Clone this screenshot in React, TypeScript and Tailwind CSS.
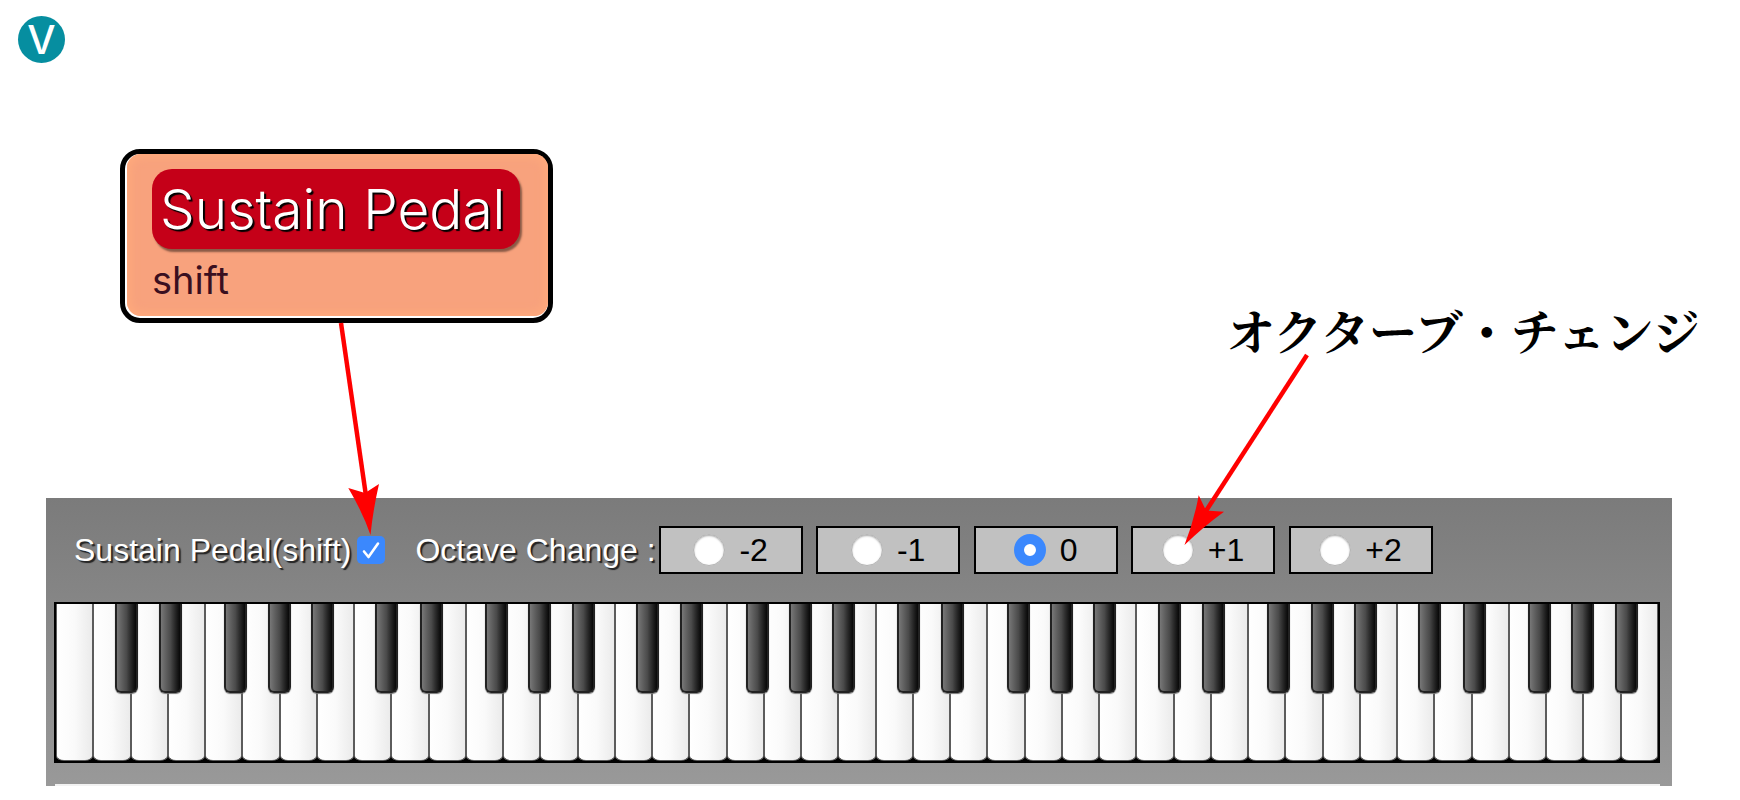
import React, { useState } from 'react';

const OCTAVES = ['-2', '-1', '0', '+1', '+2'];

// Offset of each black key from the left edge of the white key it leans on
const BLACK_KEY_OFFSET: Record<string, string> = {
  'C#': '-left-[16px]',
  'D#': '-left-[9px]',
  'F#': '-left-[18px]',
  'G#': '-left-[12px]',
  'A#': '-left-[6px]',
};

const NOTES = ['C', 'D', 'E', 'F', 'G', 'A', 'B'];
const SHARP_BEFORE: Record<string, string> = { D: 'C#', E: 'D#', G: 'F#', A: 'G#', B: 'A#' };

// One low B, then six full octaves
const KEYS = Array.from({ length: 43 }, (_, i) => {
  const note = NOTES[(i + 6) % 7];
  return { note, octave: Math.floor((i + 6) / 7), sharp: i === 0 ? undefined : SHARP_BEFORE[note] };
});

const PedalCard = () => (
  <div className="ml-[120px] rounded-[20px] border-[5px] border-black bg-white pb-[2px] pl-[2px]">
    <div className="rounded-[14px] bg-[#f8a27d] pt-[15px] pr-[28px] pb-[13px] pl-[25px] shadow-[inset_0_0_10px_3px_#ffaa7c]">
      <div className="flex h-20 w-[368px] items-center rounded-[20px] bg-[#c50018] pl-2 font-['Inter','Liberation_Sans',sans-serif] text-[55px] font-light whitespace-nowrap text-white shadow-[2px_3px_2px_#8a5a46] [text-shadow:2px_2px_1px_#000]">
        Sustain Pedal
      </div>
      <div className="mt-2 font-['Inter','Liberation_Sans',sans-serif] text-[38px] leading-[46px] text-[#3a0f20]">shift</div>
    </div>
  </div>
);

const OctaveOption = ({ value, checked, onSelect }: { value: string; checked: boolean; onSelect: () => void }) => (
  <label className="flex h-12 w-36 items-center justify-center gap-[14px] border-2 border-black bg-[#c1c1c1] text-black">
    <input
      type="radio"
      name="octave"
      value={value}
      checked={checked}
      onChange={onSelect}
      className="h-8 w-8 shrink-0 appearance-none rounded-full border border-[#b4b4b4] bg-white shadow-[inset_0_1px_2px_#aaa] checked:border-[10px] checked:border-[#3b88fd] checked:shadow-none"
    />
    <span>{value}</span>
  </label>
);

const Keyboard = () => (
  <div className="mr-3 ml-2 flex h-[161px] border-2 border-black bg-black">
    {KEYS.map(({ note, octave, sharp }) => (
      <div key={note + octave} className="relative flex-1">
        <button
          aria-label={`${note}${octave}`}
          className="block h-full w-full rounded-b-[8px_5px] border-x border-b border-[#5c5c5c] bg-linear-to-r from-white via-[#fafafa] to-[#ebebeb]"
        />
        {sharp && (
          <button
            aria-label={`${sharp}${octave}`}
            className={`absolute top-0 z-10 h-[89px] w-[23px] rounded-b-[6px] border-x-2 border-b-2 border-[#222] bg-linear-to-r from-[#777] via-[#4a4a4a] to-[#080808] shadow-[0_1px_1px_#777] ${BLACK_KEY_OFFSET[sharp]}`}
          />
        )}
      </div>
    ))}
  </div>
);

const Arrows = () => (
  <svg className="pointer-events-none absolute top-0 left-0 z-20" width="1740" height="786" fill="#f00" stroke="#f00">
    <path d="M341 323L366 496" strokeWidth="4.5" />
    <path d="M370.5 535Q363 513 348.3 488L365 493L379 484Q373 510 370.5 535Z" stroke="none" />
    <path d="M1307 355L1204 514" strokeWidth="4.5" />
    <path d="M1184.5 545Q1194 521 1198.7 495.3L1206 510.5L1224 511.7Q1203 527 1184.5 545Z" stroke="none" />
  </svg>
);

const App = () => {
  const [sustain, setSustain] = useState(true);
  const [octave, setOctave] = useState('0');

  return (
    <main className="relative overflow-hidden bg-white pt-4 font-['Liberation_Sans',Arial,sans-serif]">
      <div className="ml-[18px] flex h-[47px] w-[47px] items-center justify-center rounded-full bg-[#068ea0] font-['Inter','Liberation_Sans',sans-serif] text-[40px] leading-none font-medium text-white">
        V
      </div>

      <div className="mt-[86px] flex items-start">
        <PedalCard />
        <p
          lang="ja"
          className="mt-[155px] ml-[674px] font-['Noto_Serif_CJK_JP','Noto_Sans_CJK_JP',serif] text-[48px] leading-[52px] font-bold whitespace-nowrap text-black"
        >
          オクターブ・チェンジ
        </p>
      </div>

      <section className="mt-[142px] mr-[68px] ml-[46px] bg-linear-to-b from-[#7b7b7b] to-[#999] pt-7">
        <div className="mb-7 flex items-center pl-[28px] text-[32px] leading-none whitespace-nowrap">
          <label htmlFor="sustain" className="text-white [text-shadow:2px_2px_1px_#222]">
            Sustain Pedal(shift)
          </label>
          <span className="relative ml-[6px] flex">
            <input
              id="sustain"
              type="checkbox"
              checked={sustain}
              onChange={(e) => setSustain(e.target.checked)}
              className="h-7 w-7 appearance-none rounded-[5px] bg-white checked:bg-[#3b88fd]"
            />
            {sustain && (
              <svg className="pointer-events-none absolute inset-0" width="28" height="28" fill="none" stroke="#fff" strokeWidth="2.6" strokeLinecap="round" strokeLinejoin="round">
                <path d="M7 15.5L11.5 21L21 7.5" />
              </svg>
            )}
          </span>
          <span className="ml-[30px] text-white [text-shadow:2px_2px_1px_#222]">Octave Change :</span>
          <div className="ml-[3px] flex w-[774px] justify-between">
            {OCTAVES.map((value) => (
              <OctaveOption key={value} value={value} checked={octave === value} onSelect={() => setOctave(value)} />
            ))}
          </div>
        </div>
        <Keyboard />
        <div className="mt-[21px] mr-3 ml-[9px] h-[2px] bg-[#f2f2f2]" />
      </section>
      <Arrows />
    </main>
  );
};

export default App;
